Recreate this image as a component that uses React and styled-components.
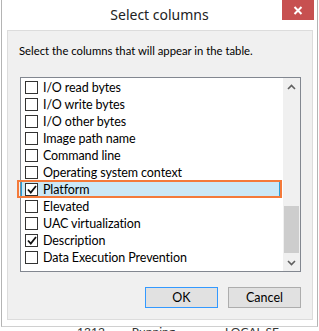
import React from "react";
import styled, { createGlobalStyle } from "styled-components";

const GlobalStyle = createGlobalStyle`
    html, body {
        margin: 0;
        padding: 0;
        background: #ffffff;
        width: 319px;
        height: 331px;
        overflow: hidden;
    }
    * {
        box-sizing: border-box;
    }
`;

const Page = styled.div`
    width: 319px;
    height: 331px;
    display: flex;
    flex-direction: column;
    font-family: Lato, "Noto Sans", sans-serif;
    color: #000;
`;

const Window = styled.div`
    margin-left: 1px;
    width: 317px;
    height: 327px;
    background: #ffffff;
    border-left: 1px solid #b4b4b4;
    border-right: 1px solid #b4b4b4;
    border-bottom: 1px solid #d0d0d0;
    display: flex;
    flex-direction: column;
`;

const TitleBar = styled.div`
    height: 30px;
    display: flex;
    align-items: flex-start;
`;

const TitleSpacer = styled.div`
    width: 35px;
`;

const Title = styled.div`
    flex: 1;
    text-align: center;
    font-family: "Noto Sans", sans-serif;
    font-size: 14px;
    line-height: 30px;
    color: #222;
`;

const CloseButton = styled.div`
    width: 32px;
    height: 20px;
    margin-right: 3px;
    background: #c75050;
    display: flex;
    align-items: center;
    justify-content: center;
`;

const Panel = styled.div`
    margin: 0 4px 0 5px;
    height: 290px;
    background: #f0f0f0;
    border: 1px solid #dcdcdc;
    padding: 0 11px 0 12px;
    display: flex;
    flex-direction: column;
`;

const Intro = styled.p`
    margin: 0;
    padding-top: 12px;
    margin-left: -1px;
    font-size: 11.3px;
    line-height: 16px;
    height: 46px;
`;

const ListBox = styled.div`
    height: 195px;
    background: #ffffff;
    border: 1px solid #828790;
    display: flex;
`;

const Rows = styled.div`
    flex: 1;
    padding-top: 1px;
    display: flex;
    flex-direction: column;
`;

const Row = styled.div`
    position: relative;
    height: 17px;
    display: flex;
    align-items: center;
    padding-left: 3px;
    margin-right: 3px;
    font-size: 12.5px;
    letter-spacing: -0.1px;
    background: ${(p) => (p.$selected ? "#cbe8f6" : "transparent")};
    border: 1px solid ${(p) => (p.$selected ? "#26a0da" : "transparent")};

    ${(p) =>
        p.$selected &&
        `
        &::after {
            content: "";
            position: absolute;
            left: -5px;
            right: -3px;
            top: -2px;
            bottom: -1px;
            border: 2px solid #f47a3a;
        }
    `}
`;

const Box = styled.span`
    width: 13px;
    height: 13px;
    border: 1px solid #333;
    background: #fff;
    display: flex;
    align-items: center;
    justify-content: center;
    margin-right: 5px;
    flex-shrink: 0;
`;

const Label = styled.span`
    line-height: 15px;
    white-space: nowrap;
`;

const ScrollBar = styled.div`
    width: 17px;
    background: #f0f0f0;
    display: flex;
    flex-direction: column;
`;

const Arrow = styled.div`
    height: 17px;
    display: flex;
    align-items: center;
    justify-content: center;
`;

const Track = styled.div`
    flex: 1;
    display: flex;
    flex-direction: column;
    padding: 0 1px;
`;

const Thumb = styled.div`
    margin-top: ${(p) => p.$top}px;
    height: ${(p) => p.$size}px;
    background: #cdcdcd;
`;

const Buttons = styled.div`
    display: flex;
    justify-content: flex-end;
    gap: 10px;
    padding-top: 15px;
`;

const Button = styled.div`
    width: 73px;
    height: 21px;
    background: #e1e1e1;
    border: 1px solid ${(p) => (p.$focused ? "#3399ff" : "#adadad")};
    display: flex;
    align-items: center;
    justify-content: center;
    font-size: 12.5px;
`;

const BehindStrip = styled.div`
    height: 4px;
    overflow: hidden;
    font-size: 12px;
    color: #333;
    display: flex;
`;

const BehindText = styled.span`
    margin-left: ${(p) => p.$x}px;
    line-height: 10px;
    white-space: nowrap;
`;

const columns = [
    { name: "I/O read bytes", checked: false },
    { name: "I/O write bytes", checked: false },
    { name: "I/O other bytes", checked: false },
    { name: "Image path name", checked: false },
    { name: "Command line", checked: false },
    { name: "Operating system context", checked: false },
    { name: "Platform", checked: true, selected: true },
    { name: "Elevated", checked: false },
    { name: "UAC virtualization", checked: false },
    { name: "Description", checked: true },
    { name: "Data Execution Prevention", checked: false },
];

function Check() {
    return (
        <svg width="10" height="9" viewBox="0 0 10 9">
            <path d="M1 4.5 L3.8 7.5 L9 1" fill="none" stroke="#111" strokeWidth="1.8" />
        </svg>
    );
}

function Chevron({ down }) {
    return (
        <svg width="9" height="6" viewBox="0 0 9 6">
            <path
                d={down ? "M1 1 L4.5 4.5 L8 1" : "M1 5 L4.5 1.5 L8 5"}
                fill="none"
                stroke="#606060"
                strokeWidth="1.6"
            />
        </svg>
    );
}

function App() {
    return (
        <Page>
            <GlobalStyle />
            <Window>
                <TitleBar>
                    <TitleSpacer />
                    <Title>Select columns</Title>
                    <CloseButton>
                        <svg width="10" height="9" viewBox="0 0 10 9">
                            <path d="M1.5 1 L8.5 8 M8.5 1 L1.5 8" stroke="#fff" strokeWidth="2" />
                        </svg>
                    </CloseButton>
                </TitleBar>
                <Panel>
                    <Intro>Select the columns that will appear in the table.</Intro>
                    <ListBox>
                        <Rows>
                            {columns.map((col) => (
                                <Row key={col.name} $selected={col.selected}>
                                    <Box>{col.checked && <Check />}</Box>
                                    <Label>{col.name}</Label>
                                </Row>
                            ))}
                        </Rows>
                        <ScrollBar>
                            <Arrow>
                                <Chevron />
                            </Arrow>
                            <Track>
                                <Thumb $top={111} $size={47} />
                            </Track>
                            <Arrow>
                                <Chevron down />
                            </Arrow>
                        </ScrollBar>
                    </ListBox>
                    <Buttons>
                        <Button $focused>OK</Button>
                        <Button>Cancel</Button>
                    </Buttons>
                </Panel>
            </Window>
            <BehindStrip>
                <BehindText $x={77}>1312</BehindText>
                <BehindText $x={27}>Running</BehindText>
                <BehindText $x={50}>LOCAL SE</BehindText>
            </BehindStrip>
        </Page>
    );
}

export default App;
